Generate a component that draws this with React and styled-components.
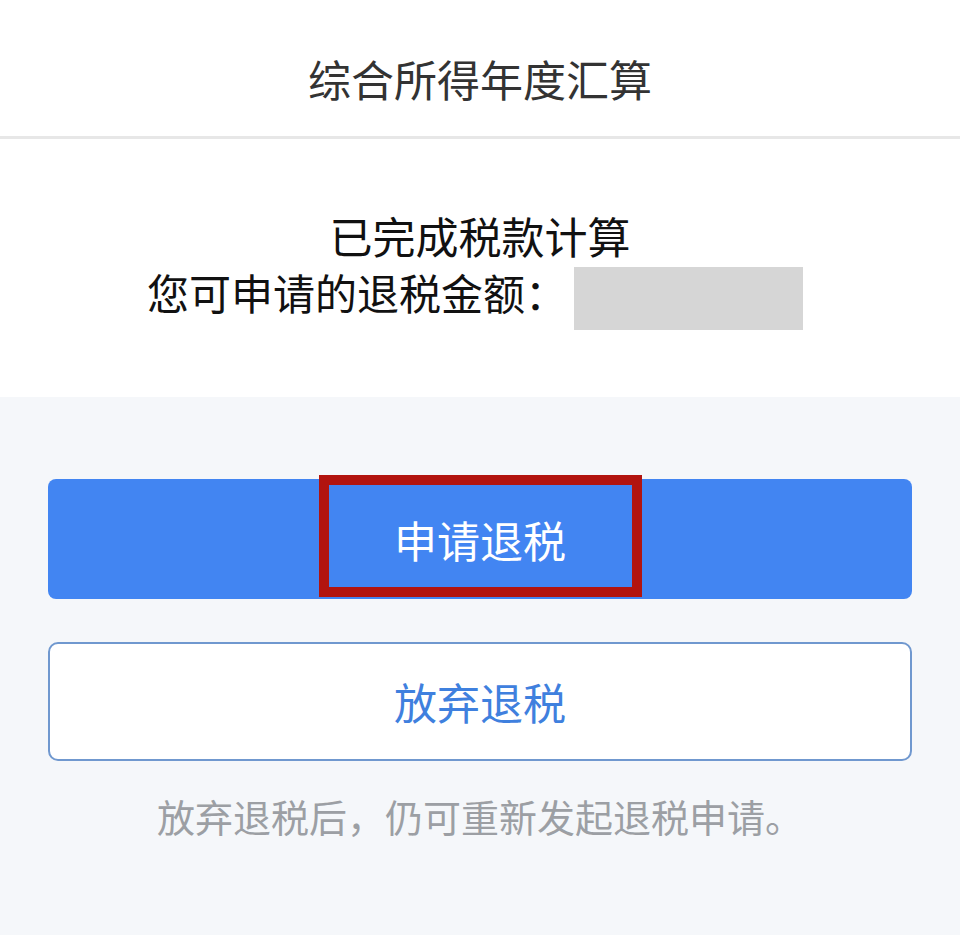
import React from "react";
import styled, { createGlobalStyle } from "styled-components";

const GlobalStyle = createGlobalStyle`
  html, body {
    margin: 0;
    padding: 0;
    background: #f5f7fa;
  }
  body {
    font-family: "Noto Sans CJK SC", "Noto Sans", sans-serif;
  }
`;

export default function App() {
  return (
    <>
      <GlobalStyle />
      <Page>
        <Header>
          <h1>综合所得年度汇算</h1>
        </Header>
        <Result>
          <p className="done">已完成税款计算</p>
          <div className="amount">
            <span>您可申请的退税金额：</span>
            <Masked />
          </div>
        </Result>
        <Actions>
          <Button $primary>
            申请退税
            <Highlight />
          </Button>
          <Button>放弃退税</Button>
          <Note>放弃退税后，仍可重新发起退税申请。</Note>
        </Actions>
      </Page>
    </>
  );
}

const Page = styled.div`
  width: 100%;
  min-height: 935px;
  display: flex;
  flex-direction: column;
  background: #f5f7fa;
`;

const Header = styled.header`
  background: #fff;
  height: 139px;
  box-sizing: border-box;
  padding-top: 57px;
  border-bottom: 3px solid #e7e7e7;
  display: flex;
  justify-content: center;
  h1 {
    margin: 0;
    font-size: 43px;
    line-height: 43px;
    font-weight: 400;
    color: #333;
  }
`;

const Result = styled.section`
  background: #fff;
  padding: 75px 0 67px;
  display: flex;
  flex-direction: column;
  align-items: center;
  .done {
    margin: 0 0 10px;
    font-size: 43px;
    line-height: 43px;
    color: #111;
  }
  .amount {
    display: flex;
    align-items: flex-start;
    margin-left: -10px;
    span {
      margin-top: 4px;
      font-size: 42px;
      line-height: 42px;
      color: #111;
    }
  }
`;

const Masked = styled.div`
  width: 229px;
  height: 63px;
  margin-left: 7px;
  background: #d6d6d6;
`;

const Actions = styled.section`
  padding: 82px 48px 0;
  display: flex;
  flex-direction: column;
  gap: 43px;
`;

const Button = styled.button`
  position: relative;
  height: ${(p) => (p.$primary ? "120px" : "119px")};
  border-radius: ${(p) => (p.$primary ? "8px" : "10px")};
  border: ${(p) => (p.$primary ? "none" : "2px solid #7098cf")};
  background: ${(p) => (p.$primary ? "#4285f2" : "#fff")};
  color: ${(p) => (p.$primary ? "#fff" : "#3f80de")};
  font-family: inherit;
  font-size: 43px;
  line-height: 43px;
  padding: 0;
  cursor: pointer;
`;

const Highlight = styled.span`
  position: absolute;
  left: 271px;
  top: -4px;
  width: 323px;
  height: 122px;
  box-sizing: border-box;
  border: 10px solid #b2140f;
  pointer-events: none;
`;

const Note = styled.p`
  margin: -7px 0 0;
  text-align: center;
  font-size: 38px;
  line-height: 38px;
  color: #9c9fa4;
`;
